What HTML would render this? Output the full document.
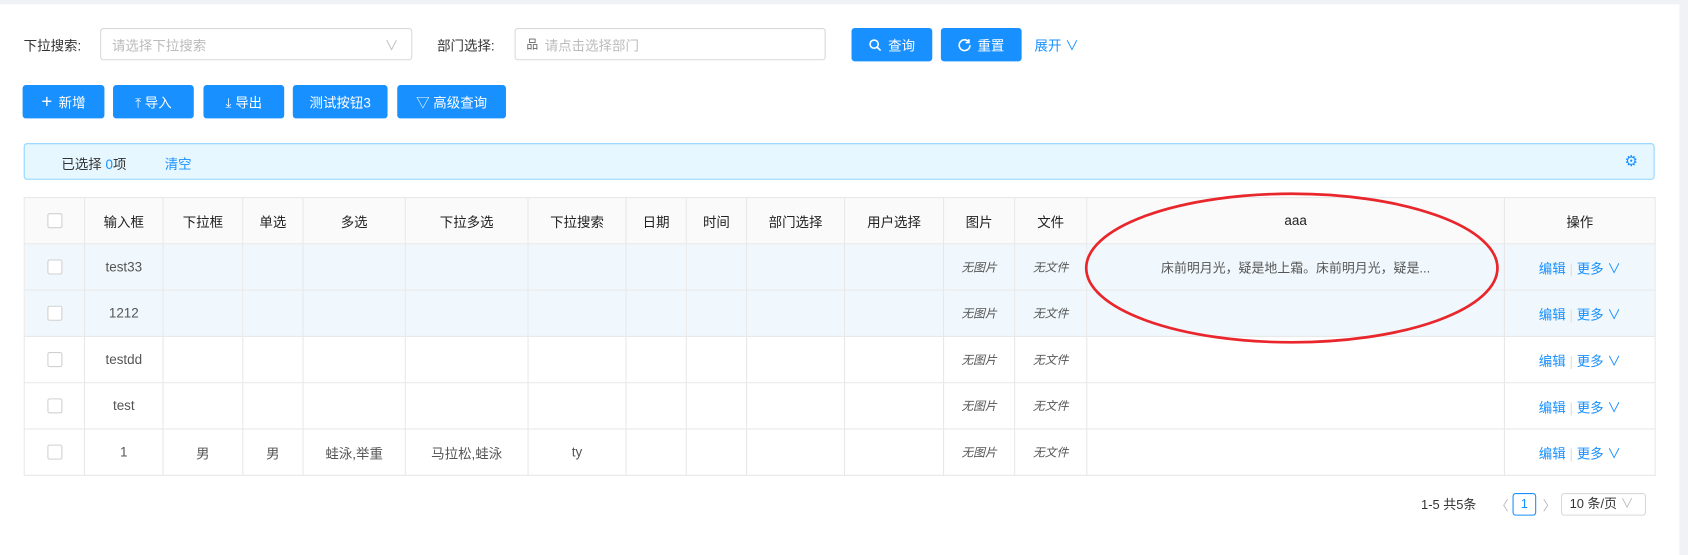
<!DOCTYPE html>
<html><head><meta charset="utf-8"><style>
*{box-sizing:border-box;margin:0;padding:0}
html,body{width:1688px;height:555px;overflow:hidden;background:#fff}
#w{width:1568px;height:516px;transform:scale(1.07653);transform-origin:0 0;position:relative;font-family:"Liberation Sans","Noto Sans CJK SC",sans-serif;font-size:12.5px;color:#333}
.a{position:absolute}
.btn{position:absolute;height:31px;background:#1890ff;color:#fff;border-radius:3px;display:flex;align-items:center;justify-content:center;font-size:12.5px;gap:6px}
.inp{position:absolute;height:30px;border:1px solid #d9d9d9;border-radius:3px;color:#bbb;font-size:12.5px;display:flex;align-items:center;padding-left:10px}
table{position:absolute;left:22px;top:183px;border-collapse:collapse;table-layout:fixed;width:1515px}
td,th{border:1px solid #e8e8e8;text-align:center;font-size:12.5px;height:43px;padding:0;white-space:nowrap;overflow:hidden;color:#555}
th{background:#fafafa;font-weight:normal;color:#222}
tr.h td{background:#f0f8fd}
.cb{display:inline-block;width:14px;height:14px;border:1px solid #d0d0d0;border-radius:2px;background:#fff;vertical-align:middle}
.i{font-style:italic;font-size:11px;color:#555}
.lk{color:#1890ff}
</style></head><body><div id="w">
<div class="a" style="left:0;top:0;width:1568px;height:4px;background:#f0f2f5"></div>
<div class="a" style="left:1560px;top:0;width:8px;height:516px;background:#f0f2f5"></div>
<div class="a" style="left:22px;top:32px">下拉搜索:</div>
<div class="inp" style="left:93px;top:26px;width:290px">请选择下拉搜索<span style="position:absolute;right:12px;color:#bbb">∨</span></div>
<div class="a" style="left:406px;top:32px">部门选择:</div>
<div class="inp" style="left:478px;top:26px;width:289px"><span style="color:#666;margin-right:6px;font-size:11px">品</span>请点击选择部门</div>
<div class="btn" style="left:791px;top:26px;width:75px"><svg width="12" height="12" viewBox="0 0 12 12" fill="none" stroke="#fff" stroke-width="1.5"><circle cx="5" cy="5" r="3.8"/><path d="M8 8l3 3"/></svg>查询</div>
<div class="btn" style="left:874px;top:26px;width:75px"><svg width="12" height="12" viewBox="0 0 12 12" fill="none" stroke="#fff" stroke-width="1.5"><path d="M10 3A5 5 0 1 0 11 6"/><path d="M10 0.5V3.5H7"/></svg>重置</div>
<div class="a lk" style="left:961px;top:32px">展开 ∨</div>
<div class="btn" style="left:21px;top:79px;width:76px"><span style="font-size:17px">+</span>新增</div>
<div class="btn" style="left:105px;top:79px;width:75px">⤒ 导入</div>
<div class="btn" style="left:189px;top:79px;width:75px">⤓ 导出</div>
<div class="btn" style="left:272px;top:79px;width:88px">测试按钮3</div>
<div class="btn" style="left:369px;top:79px;width:101px">▽ 高级查询</div>
<div class="a" style="left:22px;top:133px;width:1515px;height:34px;background:#e6f7ff;border:1px solid #91d5ff;border-radius:3px"></div>
<div class="a" style="left:57px;top:142px">已选择 <span class="lk">0</span>项</div>
<div class="a lk" style="left:153px;top:142px">清空</div>
<div class="a lk" style="left:1509px;top:141px;font-size:14px">⚙</div>
<table>
<colgroup><col style="width:56px"><col style="width:73px"><col style="width:74px"><col style="width:56px"><col style="width:95px"><col style="width:114px"><col style="width:91px"><col style="width:56px"><col style="width:56px"><col style="width:91px"><col style="width:92px"><col style="width:66px"><col style="width:67px"><col style="width:388px"><col style="width:140px"></colgroup>
<tr><th><span class="cb"></span></th><th>输入框</th><th>下拉框</th><th>单选</th><th>多选</th><th>下拉多选</th><th>下拉搜索</th><th>日期</th><th>时间</th><th>部门选择</th><th>用户选择</th><th>图片</th><th>文件</th><th>aaa</th><th>操作</th></tr>
<tr class="h"><td><span class="cb"></span></td><td>test33</td><td></td><td></td><td></td><td></td><td></td><td></td><td></td><td></td><td></td><td class="i">无图片</td><td class="i">无文件</td><td style="font-size:12px">床前明月光，疑是地上霜。床前明月光，疑是...</td><td><span class="lk">编辑</span> <span style="color:#ddd">|</span> <span class="lk">更多 ∨</span></td></tr>
<tr class="h"><td><span class="cb"></span></td><td>1212</td><td></td><td></td><td></td><td></td><td></td><td></td><td></td><td></td><td></td><td class="i">无图片</td><td class="i">无文件</td><td></td><td><span class="lk">编辑</span> <span style="color:#ddd">|</span> <span class="lk">更多 ∨</span></td></tr>
<tr><td><span class="cb"></span></td><td>testdd</td><td></td><td></td><td></td><td></td><td></td><td></td><td></td><td></td><td></td><td class="i">无图片</td><td class="i">无文件</td><td></td><td><span class="lk">编辑</span> <span style="color:#ddd">|</span> <span class="lk">更多 ∨</span></td></tr>
<tr><td><span class="cb"></span></td><td>test</td><td></td><td></td><td></td><td></td><td></td><td></td><td></td><td></td><td></td><td class="i">无图片</td><td class="i">无文件</td><td></td><td><span class="lk">编辑</span> <span style="color:#ddd">|</span> <span class="lk">更多 ∨</span></td></tr>
<tr><td><span class="cb"></span></td><td>1</td><td>男</td><td>男</td><td>蛙泳,举重</td><td>马拉松,蛙泳</td><td>ty</td><td></td><td></td><td></td><td></td><td class="i">无图片</td><td class="i">无文件</td><td></td><td><span class="lk">编辑</span> <span style="color:#ddd">|</span> <span class="lk">更多 ∨</span></td></tr>
</table>
<svg class="a" style="left:0;top:0" width="1568" height="516"><ellipse cx="1200" cy="249" rx="191" ry="69" fill="none" stroke="#e8262b" stroke-width="2.5"/></svg>
<div class="a" style="left:1320px;top:460px;font-size:12px">1-5 共5条</div>
<div class="a" style="left:1389px;top:459px;color:#bbb">〈</div>
<div class="a lk" style="left:1405px;top:458px;width:22px;height:21px;border:1px solid #1890ff;border-radius:3px;text-align:center;line-height:19px;font-size:12px">1</div>
<div class="a" style="left:1433px;top:459px;color:#bbb">〉</div>
<div class="a" style="left:1450px;top:458px;width:79px;height:21px;border:1px solid #d9d9d9;border-radius:3px;font-size:12px;line-height:19px;padding-left:7px">10 条/页 <span style="color:#bbb">∨</span></div>
</div></body></html>
